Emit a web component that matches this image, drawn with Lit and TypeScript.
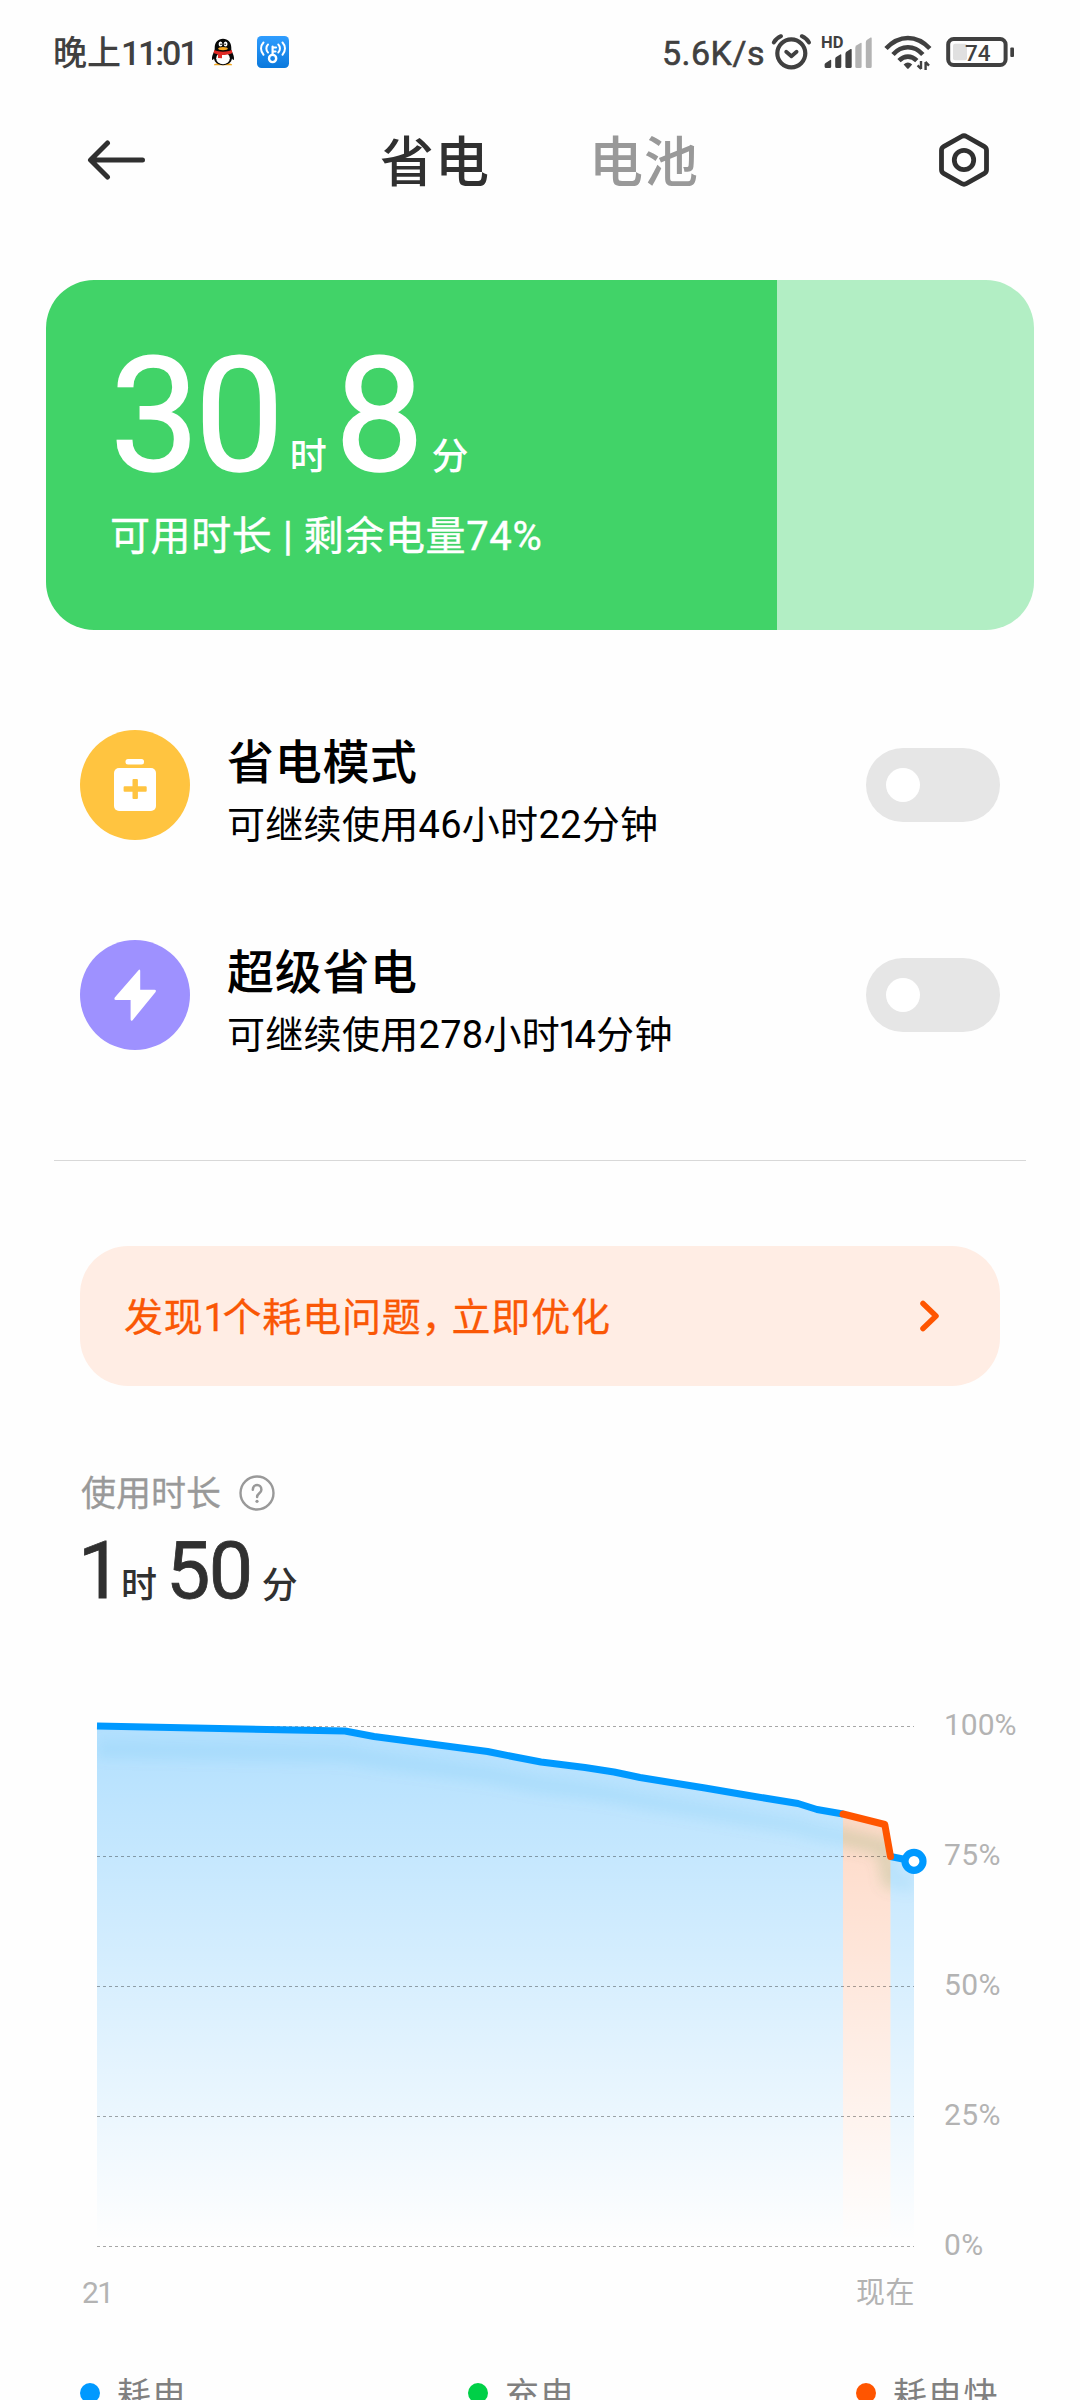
import { LitElement, html, svg, css } from "lit";
import { customElement, property } from "lit/decorators.js";

type Point = [number, number];

const drain: Point[] = [
  [97, 1726], [345, 1731], [374, 1736.5], [487.6, 1751.5], [515, 1757], [541, 1762],
  [585, 1767.5], [614, 1772], [640, 1777.5], [705, 1788], [740, 1794], [798, 1803.5],
  [817, 1809.5], [843, 1814],
];
const fast: Point[] = [[843, 1814], [884.8, 1824.5], [890.5, 1856.5]];
const tail: Point[] = [[890.5, 1856.5], [914, 1861.3]];
const baseY = 2241;

const line = (p: Point[]) => "M" + p.map((q) => q.join(" ")).join("L");
const area = (p: Point[]) => `${line(p)}V${baseY}H${p[0][0]}Z`;

@customElement("status-bar")
class StatusBar extends LitElement {
  static styles = css`
    :host { display: flex; align-items: flex-start; height: 71px; padding: 33px 60px 0 53px; box-sizing: border-box; color: #404040; }
    .time, .speed { font-size: 34px; line-height: 40px; font-weight: 500; white-space: nowrap; }
    .time { width: 155px; }
    .digits { letter-spacing: -2.2px; }
    .speed { margin-left: auto; margin-right: 3px; letter-spacing: 0.5px; font-weight: 400; -webkit-text-stroke: 0.6px #404040; }
    svg { display: block; flex: none; }
  `;
  render() {
    return html`
      <div class="time">晚上<span class="digits">11:01</span></div>
      <svg width="84" height="38" viewBox="208 33 84 38">
        <path d="M214 65.2c-.4-1.4 3-2 5-2h8c2 0 5.600.6 5 2z" fill="#f0a51c" />
        <path d="M223 38.700c5 0 8.300 3.600 8.300 9 0 1.700 0 2.500.7 4 1 2.300 2.300 4.800 2 7.600-.1 1-1.300.7-2-.7-.5 3.800-4 6.600-9 6.600s-8.500-2.800-9-6.600c-.7 1.400-1.900 1.700-2 .7-.3-2.800 1-5.300 2-7.600.7-1.500.7-2.300.7-4 0-5.400 3.300-9 8.300-9z" fill="#080808" />
        <ellipse cx="223" cy="58.300" rx="6.800" ry="6" fill="#fff" />
        <ellipse cx="220.500" cy="44" rx="1.900" ry="2.500" fill="#fff" /><ellipse cx="225.600" cy="44" rx="1.900" ry="2.500" fill="#fff" />
        <circle cx="221" cy="44.200" r=".8" /><circle cx="225.100" cy="44.200" r=".8" />
        <ellipse cx="223" cy="48.600" rx="4.800" ry="1.700" fill="#f7a823" />
        <path d="M214.200 50c5 2.200 12.500 2.200 17.600 0l.6 3c-3 1.500-6.600 2-10.400 2v3.300l-4-.3v-3.600c-1.600-.3-3.200-.7-4.400-1.400z" fill="#e02a26" />
        <defs><linearGradient id="key" x2="0" y2="1"><stop stop-color="#2f9dff" /><stop offset="1" stop-color="#0a78dc" /></linearGradient></defs>
        <rect x="257" y="36" width="32" height="32" rx="4.500" fill="url(#key)" />
        <g fill="none" stroke="#fff" stroke-width="2" stroke-linecap="round">
          <circle cx="272.600" cy="58.500" r="3.600" stroke-width="2.400" />
          <path d="M272.600 54.500V46.500M273 47.500h3M273 51.500h2.500" stroke-width="2.200" />
          <path d="M268 44.500c-2.200 2-2.200 6 0 8M263.500 42.500c-3.300 3.400-3.300 8.800 0 12.200M278.300 44.500c2.200 2 2.200 6 0 8M282.500 42.500c3.300 3.400 3.300 8.800 0 12.200" />
        </g>
      </svg>
      <div class="speed">5.6K/s</div>
      <svg width="252" height="38" viewBox="768 33 252 38">
        <g fill="none" stroke="#404040" stroke-width="4.200">
          <circle cx="791.300" cy="53.300" r="14" />
          <path d="M773.800 42.500c1.700-3 4-5 7.200-6.300M809 42.500c-1.700-3-4-5-7.200-6.300" stroke-linecap="round" stroke-width="4" />
          <path d="M786.200 51.800l5.200 4.400 5.200-4.400" stroke-linecap="round" stroke-linejoin="round" stroke-width="3.800" />
        </g>
        <text x="821" y="48" font-size="16.500" font-weight="700" fill="#404040">HD</text>
        <g fill="#404040">
          <path d="M824.600 64.500q0-1 1-1.600l4.600-3q1-.5 1 .6V66.500q0 1.500-1.500 1.500h-3.600q-1.500 0-1.500-1.500z" />
          <path d="M835.200 59q0-1.500 1-2.100l4-2.400q1.100-.6 1.100.6V66.500q0 1.500-1.500 1.500h-3.100q-1.500 0-1.500-1.500z" />
          <path d="M845.400 54q0-1.500 1-2.300l4.200-2.600q1.100-.6 1.100.6V66.500q0 1.500-1.500 1.500h-3.300q-1.500 0-1.500-1.500z" />
          <g fill="#b3b3b3">
            <path d="M855.300 48q0-1.700 1-2.500l4.200-2.600q1.100-.6 1.100.6V66.500q0 1.500-1.500 1.500h-3.300q-1.500 0-1.500-1.500z" />
            <path d="M865.800 42.500q0-1.700 1-2.500l3.800-2.400q1.100-.6 1.100.6V66.500q0 1.500-1.500 1.500h-2.900q-1.500 0-1.500-1.500z" />
          </g>
        </g>
        <g fill="none" stroke="#404040" stroke-width="4.600">
          <path d="M886 48.500Q896 38 907.900 38T929.800 48.500" />
          <path d="M893 54.500Q899.500 47.300 907.900 47.300T922.800 54.500" />
          <path d="M899 60.600Q903 56.600 907.900 56.600T916.800 60.600" />
        </g>
        <path d="M903.600 64.500q4.300-4 8.600 0l-3.300 3.800q-1 1-2 0z" fill="#404040" />
        <path d="M921 61v8M921.200 69l-3.600-3.600M925.600 70v-8M925.400 61.800l3.600 3.800" stroke="#404040" stroke-width="2.400" fill="none" />
        <rect x="948.200" y="39" width="57.400" height="26" rx="5.500" fill="none" stroke="#404040" stroke-width="4" />
        <rect x="953" y="43.700" width="14" height="16.600" rx="2" fill="#e0e0e0" />
        <rect x="1010.300" y="47.500" width="3.700" height="9.500" rx="1" fill="#404040" />
        <text x="965" y="60.800" font-size="22.500" font-weight="500" fill="#404040">74</text>
      </svg>
    `;
  }
}

@customElement("mode-row")
class ModeRow extends LitElement {
  @property() name = "";
  @property() detail = "";
  @property() kind = "save";
  static styles = css`
    :host { display: flex; height: 110px; padding: 0 80px; color: #000; }
    svg { display: block; flex: none; }
    .text { padding: 6px 0 0 37px; flex: 1; white-space: nowrap; }
    .name { font-size: 47px; line-height: 54px; letter-spacing: 0.7px; font-weight: 500; }
    .detail { font-size: 38px; line-height: 44px; letter-spacing: 0.3px; margin-top: 13px; }
    .narrow { letter-spacing: -5px; margin-left: -2px; }
    .toggle { align-self: center; width: 134px; height: 74px; border-radius: 37px; background: #e6e6e6; display: flex; align-items: center; padding-left: 20px; box-sizing: border-box; }
    .knob { width: 34px; height: 34px; border-radius: 50%; background: #fff; }
  `;
  render() {
    const save = this.kind === "save";
    return html`
      <svg width="110" height="110" viewBox="0 0 110 110">
        <circle cx="55" cy="55" r="55" fill=${save ? "#ffc440" : "#9e91ff"} />
        ${save
          ? svg`<rect x="45.500" y="29" width="18.500" height="5.500" rx="2.500" fill="#fff"/>
              <rect x="34" y="38" width="42" height="43" rx="5" fill="#fff"/>
              <path d="M52.500 50q0-1 1-1h3.400q1 0 1 1v6.300h7.800q1 0 1 1v3.400q0 1-1 1h-7.800V68q0 1-1 1h-3.400q-1 0-1-1v-6.300h-7.900q-1 0-1-1v-3.400q0-1 1-1h7.900z" fill="#ffc440"/>`
          : svg`<path d="M58.500 30.200L34.800 57.500Q33.600 60 36 60H50.600V79.500Q51 81.500 52.600 80.200L75.600 52Q76.600 49.800 74.500 49.800H60.200V30.500Q59.500 28.800 58.500 30.200Z" fill="#fff"/>`}
      </svg>
      <div class="text">
        <div class="name">${this.name}</div>
        <div class="detail">${this.detail.split(/(1)/).map((s) => (s === "1" ? html`<span class="narrow">1</span>` : s))}</div>
      </div>
      <div class="toggle"><div class="knob"></div></div>
    `;
  }
}

@customElement("usage-chart")
class UsageChart extends LitElement {
  static styles = css`
    :host { display: block; }
    .plot { display: flex; padding-left: 80px; height: 560px; }
    svg { display: block; flex: none; }
    .levels { display: flex; flex-direction: column; gap: 100px; padding: 10px 0 0 10px; letter-spacing: 0.4px; }
    .levels, .hours { font-size: 30px; line-height: 30px; color: #b3b3b3; }
    .levels div:first-child { letter-spacing: 0; }
    .hours { display: flex; justify-content: space-between; padding: 18px 165px 0 82px; }
    .now { font-size: 29px; letter-spacing: 0.5px; }
    .first { letter-spacing: -1.5px; }
  `;
  render() {
    return html`
      <div class="plot">
        <svg width="854" height="560" viewBox="80 1700 854 560">
          <defs>
            <linearGradient id="blue" gradientUnits="userSpaceOnUse" x1="0" y1="1726" x2="0" y2=${baseY}>
              <stop stop-color="#0099ff" stop-opacity=".3" /><stop offset="1" stop-color="#0099ff" stop-opacity="0" />
            </linearGradient>
            <linearGradient id="orange" gradientUnits="userSpaceOnUse" x1="0" y1="1726" x2="0" y2=${baseY}>
              <stop stop-color="#ff5500" stop-opacity=".26" /><stop offset="1" stop-color="#ff5500" stop-opacity="0" />
            </linearGradient>
            <filter id="soft" x="-10%" y="-50%" width="120%" height="200%"><feGaussianBlur stdDeviation="7" /></filter>
            <clipPath id="under"><path d=${area([...drain, ...fast, ...tail])} /></clipPath>
            <clipPath id="hot"><path d=${area(fast)} /></clipPath>
          </defs>
          <path d=${area(drain)} fill="url(#blue)" />
          <path d=${area(fast)} fill="url(#orange)" />
          <path d=${area(tail)} fill="url(#blue)" />
          <g clip-path="url(#under)">
            <path d=${line([...drain, ...fast, ...tail])} transform="translate(0 23)" fill="none" stroke="#1a96dc" stroke-width="16" stroke-opacity=".085" filter="url(#soft)" />
          </g>
          <g clip-path="url(#hot)">
            <path d=${line([...drain, ...fast, ...tail])} transform="translate(0 23)" fill="none" stroke="#8a9a20" stroke-width="18" stroke-opacity=".13" filter="url(#soft)" />
          </g>
          ${[0, 1, 2, 3, 4].map(
            (i) => svg`<path d="M97 ${1726.5 + i * 130}H914" stroke="#000" stroke-opacity=".34" stroke-width="1" stroke-dasharray="3 3"/>`
          )}
          <g fill="none" stroke-width="7" stroke-linejoin="round">
            <path d=${line(drain)} stroke="#0099ff" />
            <path d=${line(tail)} stroke="#0099ff" />
            <path d=${line(fast)} stroke="#ff5500" stroke-linecap="round" />
          </g>
          <circle cx="914" cy="1861.300" r="9" fill="#fff" stroke="#0099ff" stroke-width="7.200" />
        </svg>
        <div class="levels">${["100%", "75%", "50%", "25%", "0%"].map((t) => html`<div>${t}</div>`)}</div>
      </div>
      <div class="hours"><span class="first">21</span><span class="now">现在</span></div>
    `;
  }
}

@customElement("app-root")
class AppRoot extends LitElement {
  static styles = css`
    :host { display: block; width: 1080px; height: 2400px; overflow: hidden; background: #fefefe; font-family: Roboto, "Noto Sans CJK SC", sans-serif; color: #303030; }
    svg { display: block; flex: none; }
    .header { display: grid; grid-template-columns: 1fr auto 1fr; align-items: center; height: 112px; margin-top: 33px; padding: 0 88px 0 87px; }
    .tabs { display: flex; gap: 99px; padding-top: 7px; font-size: 54px; line-height: 60px; font-weight: 500; letter-spacing: 1px; }
    .idle { color: #999; }
    .gear { justify-self: end; }
    .card { margin: 64px 46px 0; height: 350px; border-radius: 48px; box-sizing: border-box; padding: 56px 0 0 64px; color: #fff; white-space: nowrap; }
    .remaining { display: flex; align-items: baseline; height: 160px; }
    .big { font-size: 159px; line-height: 160px; letter-spacing: -4.5px; -webkit-text-stroke: 1.5px #fff; }
    .unit { font-size: 37px; line-height: 1; font-weight: 500; }
    .caption { font-size: 40px; line-height: 48px; letter-spacing: 0.6px; margin-top: 17px; -webkit-text-stroke: 0.4px #fff; }
    .modes { display: grid; gap: 100px; margin-top: 100px; }
    .divider { height: 1px; margin: 110px 54px 0; background: #d8d8d8; }
    .alert { display: flex; align-items: center; justify-content: space-between; height: 140px; margin: 85px 80px 0; padding: 0 60px 0 44px; box-sizing: border-box; border-radius: 48px; background: #ffede4; color: #fa5705; font-size: 39px; line-height: 48px; letter-spacing: 0.8px; white-space: nowrap; -webkit-text-stroke: 0.3px #fa5705; }
    .one { letter-spacing: -3px; }
    .comma { letter-spacing: -9px; }
    .alert-text { padding-top: 4px; }
    .usage-label { display: flex; align-items: center; gap: 17px; margin-top: 88px; padding-left: 81px; height: 42px; font-size: 35px; line-height: 42px; color: #999; -webkit-text-stroke: 0.3px #999; }
    .label-help { margin-bottom: 5px; }
    .usage { display: flex; align-items: baseline; height: 80px; margin-top: 15px; padding-left: 78px; }
    .mid { font-size: 79px; line-height: 80px; letter-spacing: -1.5px; -webkit-text-stroke: 0.8px #303030; }
    .usage .unit { font-size: 36px; }
    .g9 { margin-left: 9px; } .g10 { margin-left: 10px; } .g8 { margin-left: 8px; } .g12 { margin-left: 12px; }
    usage-chart { margin-top: 89px; }
    .legend { display: grid; grid-template-columns: repeat(3, 388px); margin-top: 67px; padding-left: 80px; font-size: 34px; line-height: 40px; letter-spacing: 1.2px; color: #808080; }
    .key { display: flex; align-items: center; gap: 17px; white-space: nowrap; }
    .dot { width: 20px; height: 20px; border-radius: 50%; margin-bottom: 4px; }
    .blue { background: #0099ff; } .green { background: #00d047; } .orange { background: #ff5500; }
  `;
  render() {
    const level = 74;
    return html`
      <status-bar></status-bar>
      <div class="header">
        <svg width="58" height="40" viewBox="87 140.500 58 40" fill="none" stroke="#303030" stroke-width="5" stroke-linecap="round" stroke-linejoin="round"><path d="M142.500 160.500H91M107.500 143.500L90.500 160.500l17 17" /></svg>
        <div class="tabs"><span>省电</span><span class="idle">电池</span></div>
        <svg class="gear" width="54" height="56" viewBox="938 132 54 56" fill="none" stroke="#303030" stroke-width="4.800"><path d="M961.500 136.500q2.500-1.500 5 0l17.500 9.800q2.500 1.500 2.500 4v19.400q0 2.500-2.500 4l-17.500 9.800q-2.500 1.500-5 0l-17.500-9.800q-2.500-1.500-2.500-4v-19.400q0-2.500 2.500-4z" /><circle cx="964" cy="160" r="9.700" /></svg>
      </div>
      <div class="card" style="background: linear-gradient(90deg, #41d368 ${level}%, #b2eec4 ${level}%)">
        <div class="remaining"><span class="big">30</span><span class="unit g10">时</span><span class="big g8">8</span><span class="unit g12">分</span></div>
        <div class="caption">可用时长 | 剩余电量${level}%</div>
      </div>
      <div class="modes">
        <mode-row kind="save" name="省电模式" detail="可继续使用46小时22分钟"></mode-row>
        <mode-row kind="ultra" name="超级省电" detail="可继续使用278小时14分钟"></mode-row>
      </div>
      <div class="divider"></div>
      <div class="alert">
        <div class="alert-text">发现<span class="one">1</span>个耗电问题<span class="comma">，</span>立即优化</div>
        <svg width="20" height="34" viewBox="0 0 20 34" fill="none" stroke="#ff5500" stroke-width="5.500" stroke-linecap="round" stroke-linejoin="round"><path d="M3 4.500L16 17 3 29.500" /></svg>
      </div>
      <div class="usage-label">使用时长
        <svg class="label-help" width="38" height="38" viewBox="0 0 38 38" fill="none" stroke="#999" stroke-width="2.400"><circle cx="19" cy="19" r="16.500" /><path d="M14.800 15.800c0-6.300 8.600-6.300 8.600 0 0 3.500-4.300 3.500-4.300 7.200" stroke-width="2.500" stroke-linecap="round" /><circle cx="19" cy="27.300" r="1.600" fill="#999" stroke="none" /></svg>
      </div>
      <div class="usage"><span class="mid">1</span><span class="unit">时</span><span class="mid g9">50</span><span class="unit g10">分</span></div>
      <usage-chart></usage-chart>
      <div class="legend">
        <div class="key"><span class="dot blue"></span>耗电</div>
        <div class="key"><span class="dot green"></span>充电</div>
        <div class="key"><span class="dot orange"></span>耗电快</div>
      </div>
    `;
  }
}
